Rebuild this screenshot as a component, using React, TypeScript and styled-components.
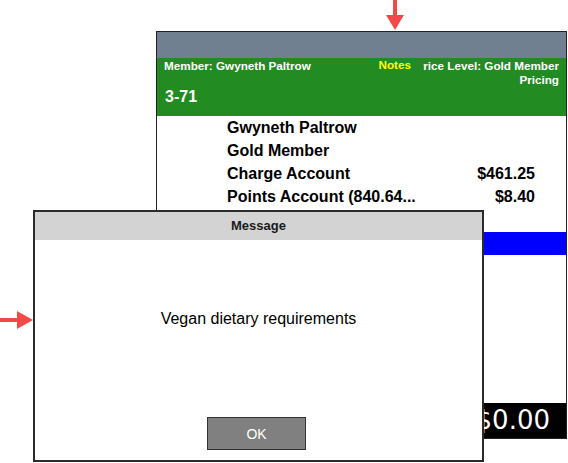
import styled, {createGlobalStyle} from "styled-components";

const GlobalStyle = createGlobalStyle`
	html, body {
		margin: 0;
		background: #ffffff;
	}
	* {
		box-sizing: border-box;
	}
`;

const accounts = [
	{label: "Gwyneth Paltrow", value: ""},
	{label: "Gold Member", value: ""},
	{label: "Charge Account", value: "$461.25"},
	{label: "Points Account (840.64...", value: "$8.40"},
];

export default function App() {
	return (
		<Screen>
			<GlobalStyle/>
			<Stage>
				<Panel>
					<TitleBar/>
					<MemberHeader>
						<MemberRow>
							<MemberName>Member: Gwyneth Paltrow</MemberName>
							<NotesLink>Notes</NotesLink>
							<PriceLevel>
								<span>Price Level: Gold Member</span>
								<span>Pricing</span>
							</PriceLevel>
						</MemberRow>
						<TableNumber>3-71</TableNumber>
					</MemberHeader>

					<AccountList>
						{accounts.map((a) => (
							<AccountRow key={a.label}>
								<span>{a.label}</span>
								<span>{a.value}</span>
							</AccountRow>
						))}
					</AccountList>

					<SelectedBar/>
					<Spacer/>
					<TotalBar>$0.00</TotalBar>
				</Panel>
			</Stage>

			<Dialog>
				<DialogTitle>Message</DialogTitle>
				<DialogBody>
					<DialogText>Vegan dietary requirements</DialogText>
					<Spacer/>
					<OkButton>OK</OkButton>
				</DialogBody>
			</Dialog>

			<DownArrow width="18" height="30" viewBox="0 0 18 30">
				<rect x="7" y="0" width="4" height="16" fill="#f24848"/>
				<polygon points="0,15 18,15 9,30" fill="#f24848"/>
			</DownArrow>
			<RightArrow width="33" height="18" viewBox="0 0 33 18">
				<rect x="0" y="7" width="18" height="4" fill="#f24848"/>
				<polygon points="17,0 17,18 33,9" fill="#f24848"/>
			</RightArrow>
		</Screen>
	);
}

const Screen = styled.div`
	position: relative;
	width: 568px;
	height: 463px;
	overflow: hidden;
	font-family: "Liberation Sans", Arial, sans-serif;
`;

const Stage = styled.div`
	padding: 31px 0 0 156px;
`;

const Panel = styled.div`
	width: 411px;
	height: 408px;
	border: 1px solid #222;
	background: #fff;
	display: flex;
	flex-direction: column;
`;

const TitleBar = styled.div`
	height: 26px;
	background: #708090;
`;

const MemberHeader = styled.div`
	height: 58px;
	background: #228b22;
	padding: 1px 7px 0 7px;
	color: #fff;
	font-weight: bold;
`;

const MemberRow = styled.div`
	display: flex;
	align-items: flex-start;
	font-size: 11.7px;
	line-height: 14px;
`;

const MemberName = styled.div`
	flex: 1;
	white-space: nowrap;
`;

const NotesLink = styled.div`
	color: #ffff00;
	margin-right: 12px;
	margin-top: -1px;
`;

const PriceLevel = styled.div`
	width: 136px;
	overflow: hidden;
	display: flex;
	flex-direction: column;
	align-items: flex-end;
	white-space: nowrap;
`;

const TableNumber = styled.div`
	font-size: 16px;
	line-height: 18px;
	margin: 1px 0 0 1px;
`;

const AccountList = styled.div`
	padding: 0 31px 0 70px;
`;

const AccountRow = styled.div`
	display: flex;
	justify-content: space-between;
	font-size: 16px;
	font-weight: bold;
	line-height: 23px;
	color: #000;
`;

const SelectedBar = styled.div`
	margin-top: 24px;
	height: 23px;
	background: #0000ff;
`;

const Spacer = styled.div`
	flex: 1;
`;

const TotalBar = styled.div`
	height: 35px;
	background: #000;
	color: #fff;
	font-family: "DejaVu Sans", Verdana, sans-serif;
	font-size: 26px;
	line-height: 35px;
	text-align: right;
	padding-right: 16px;
`;

const Dialog = styled.div`
	position: absolute;
	left: 33px;
	top: 210px;
	width: 451px;
	height: 252px;
	border: 2px solid #2b2b2b;
	background: #fff;
	display: flex;
	flex-direction: column;
`;

const DialogTitle = styled.div`
	height: 28px;
	background: #d3d3d3;
	color: #1a1a1a;
	font-size: 13px;
	font-weight: bold;
	line-height: 28px;
	text-align: center;
`;

const DialogBody = styled.div`
	flex: 1;
	display: flex;
	flex-direction: column;
	align-items: center;
	padding-bottom: 10px;
`;

const DialogText = styled.div`
	margin-top: 69px;
	font-size: 16px;
	line-height: 20px;
	color: #000;
`;

const OkButton = styled.button`
	width: 99px;
	height: 33px;
	margin-right: 4px;
	background: #808080;
	border: 1px solid #333;
	color: #fff;
	font-family: "Liberation Sans", Arial, sans-serif;
	font-size: 14px;
	padding: 0;
`;

const DownArrow = styled.svg`
	position: absolute;
	left: 386px;
	top: 0;
`;

const RightArrow = styled.svg`
	position: absolute;
	left: 0;
	top: 311px;
`;
